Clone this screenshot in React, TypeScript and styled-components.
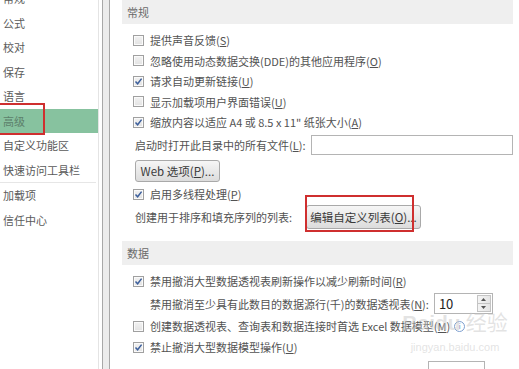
import React from "react";
import styled, { createGlobalStyle } from "styled-components";

const GlobalStyle = createGlobalStyle`
  body {
    margin: 0;
    background: #ffffff;
    font-family: "Noto Sans CJK SC", "Noto Sans", sans-serif;
    overflow: hidden;
  }
`;

const Window = styled.div`
  position: relative;
  display: flex;
  width: 519px;
  height: 369px;
  overflow: hidden;
  background: #ffffff;
  color: #505050;
  font-size: 11px;
`;

const Nav = styled.nav`
  width: 98px;
  flex-shrink: 0;
  border-right: 1px solid #e4e4e4;
  overflow: hidden;
`;

const NavList = styled.ul`
  list-style: none;
  margin: -14px 0 0;
  padding: 0;
`;

const NavItem = styled.li<{ $active?: boolean }>`
  position: relative;
  height: 24.5px;
  line-height: 24.5px;
  padding-left: 3px;
  margin-right: ${(p) => (p.$active ? "-4px" : "0")};
  font-size: 11px;
  color: ${(p) => (p.$active ? "#5d806b" : "#5a5a5a")};
  background: ${(p) => (p.$active ? "#87c29f" : "transparent")};
  white-space: nowrap;
`;

const NavSeparator = styled.li`
  height: 0;
  border-top: 1px solid #e6e6e6;
  margin: 0 2px 0 0;
`;

const RedMark = styled.span<{ $top: number; $left: number; $w: number; $h: number }>`
  position: absolute;
  top: ${(p) => p.$top}px;
  left: ${(p) => p.$left}px;
  width: ${(p) => p.$w}px;
  height: ${(p) => p.$h}px;
  border: 2px solid #cf2f2f;
  box-sizing: border-box;
  pointer-events: none;
`;

const Splitter = styled.div`
  width: 8px;
  flex-shrink: 0;
  margin-left: 3px;
  box-sizing: border-box;
  border-left: 1px solid #a8a8a8;
  border-right: 1px solid #a8a8a8;
  background: #ececec;
`;

const Main = styled.main`
  flex: 1;
  padding: 0 6px 0 12px;
  min-width: 0;
`;

const SectionHeader = styled.div<{ $gap?: number }>`
  height: 24px;
  line-height: 24px;
  margin-top: ${(p) => p.$gap ?? 0}px;
  padding-left: 5px;
  background: #efefef;
  color: #6a6a6a;
  font-size: 11px;
`;

const Options = styled.div<{ $top: number }>`
  padding: ${(p) => p.$top}px 0 0 11px;
`;

const Row = styled.div<{ $h?: number; $indent?: number }>`
  display: flex;
  align-items: center;
  height: ${(p) => p.$h ?? 20.5}px;
  padding-left: ${(p) => p.$indent ?? 0}px;
  white-space: nowrap;
`;

const Box = styled.span`
  display: inline-flex;
  align-items: center;
  justify-content: center;
  width: 11px;
  height: 11px;
  flex-shrink: 0;
  box-sizing: border-box;
  border: 1px solid #a0a0a0;
  background: linear-gradient(#f2f2f2, #e2e2e2);
  box-shadow: inset 0 0 0 1px #fafafa;
`;

const Label = styled.span<{ $gap?: number }>`
  margin-left: ${(p) => p.$gap ?? 6}px;
  color: #525252;
  u {
    text-decoration: underline;
    text-underline-offset: 1px;
  }
`;

const TextInput = styled.div`
  flex: 1;
  height: 20px;
  margin-left: 6px;
  box-sizing: border-box;
  border: 1px solid #b4b4b4;
  background: #ffffff;
`;

const Button = styled.button<{ $w: number; $h: number }>`
  width: ${(p) => p.$w}px;
  height: ${(p) => p.$h}px;
  padding: 0;
  box-sizing: border-box;
  border: 1px solid #a9a9a9;
  border-radius: 3px;
  background: linear-gradient(#f6f6f6, #dcdcdc);
  color: #3a3a3a;
  font-family: "Noto Sans CJK SC", "Noto Sans", sans-serif;
  font-size: 11.5px;
  white-space: nowrap;
  u {
    text-underline-offset: 1px;
  }
`;

const ButtonHolder = styled.span`
  position: relative;
  display: inline-flex;
  margin-left: 14px;
`;

const Spinner = styled.div`
  display: flex;
  align-items: stretch;
  width: 59px;
  height: 21px;
  margin-left: 5px;
  box-sizing: border-box;
  border: 1px solid #b4b4b4;
  background: #ffffff;
`;

const SpinValue = styled.span`
  flex: 1;
  padding-left: 4px;
  line-height: 19px;
  font-size: 13px;
  color: #222222;
`;

const SpinButtons = styled.div`
  display: flex;
  flex-direction: column;
  width: 12px;
  margin: 1px;
  border: 1px solid #c4c4c4;
  background: linear-gradient(90deg, #f4f4f4, #e4e4e4);
`;

const SpinHalf = styled.div`
  flex: 1;
  display: flex;
  align-items: center;
  justify-content: center;
  & + & {
    border-top: 1px solid #c4c4c4;
  }
`;

const InfoIcon = styled.span`
  display: inline-flex;
  align-items: center;
  justify-content: center;
  width: 9px;
  height: 9px;
  margin-left: 4px;
  border: 1px solid #7d9fd0;
  border-radius: 50%;
  color: #5b82bd;
  font-size: 7px;
  line-height: 1;
`;

const CutBox = styled.div`
  width: 57px;
  height: 20px;
  margin-left: 295px;
  margin-top: 3px;
  box-sizing: border-box;
  border: 1px solid #b4b4b4;
  border-bottom: none;
`;

const Watermark = styled.div`
  position: absolute;
  left: 398px;
  top: 308px;
  width: 114px;
  display: flex;
  flex-direction: column;
  align-items: center;
  color: rgba(200, 200, 200, 0.5);
  font-family: "Liberation Sans", sans-serif;
  white-space: nowrap;
  pointer-events: none;
`;

const WatermarkLogo = styled.span`
  font-size: 21px;
  line-height: 26px;
  font-weight: bold;
  span {
    font-family: "Noto Sans CJK SC", sans-serif;
    font-weight: normal;
    margin-left: 5px;
  }
`;

const WatermarkUrl = styled.span`
  font-size: 11px;
  line-height: 14px;
  margin-top: 4px;
`;

const Check = ({ checked }: { checked?: boolean }) => (
  <Box>
    {checked && (
      <svg width="9" height="9" viewBox="0 0 9 9">
        <path d="M1.5 4.6 L3.6 6.8 L7.6 1.6" fill="none" stroke="#3c5f9c" strokeWidth="1.5" />
      </svg>
    )}
  </Box>
);

const Arrow = ({ up }: { up?: boolean }) => (
  <svg width="5" height="3" viewBox="0 0 5 3">
    <path d={up ? "M0 3 L2.5 0 L5 3 Z" : "M0 0 L2.5 3 L5 0 Z"} fill="#555555" />
  </svg>
);

const navItems = ["常规", "公式", "校对", "保存", "语言"];

export default function App() {
  return (
    <Window>
      <GlobalStyle />
      <Nav>
        <NavList>
          {navItems.map((n) => (
            <NavItem key={n}>{n}</NavItem>
          ))}
          <NavItem $active>
            高级
            <RedMark $top={-6} $left={-3} $w={48} $h={32} />
          </NavItem>
          <NavItem>自定义功能区</NavItem>
          <NavItem>快速访问工具栏</NavItem>
          <NavSeparator />
          <NavItem>加载项</NavItem>
          <NavItem>信任中心</NavItem>
        </NavList>
      </Nav>
      <Splitter />
      <Main>
        <SectionHeader>常规</SectionHeader>
        <Options $top={6}>
          <Row>
            <Check />
            <Label>
              提供声音反馈(<u>S</u>)
            </Label>
          </Row>
          <Row>
            <Check />
            <Label>
              忽略使用动态数据交换(DDE)的其他应用程序(<u>O</u>)
            </Label>
          </Row>
          <Row>
            <Check checked />
            <Label>
              请求自动更新链接(<u>U</u>)
            </Label>
          </Row>
          <Row>
            <Check />
            <Label>
              显示加载项用户界面错误(<u>U</u>)
            </Label>
          </Row>
          <Row>
            <Check checked />
            <Label>
              缩放内容以适应 A4 或 8.5 x 11" 纸张大小(<u>A</u>)
            </Label>
          </Row>
          <Row $h={24} $indent={2}>
            <Label $gap={0}>
              启动时打开此目录中的所有文件(<u>L</u>):
            </Label>
            <TextInput />
          </Row>
          <Row $h={28} $indent={2}>
            <Button $w={85} $h={22}>
              Web 选项(<u>P</u>)...
            </Button>
          </Row>
          <Row $h={19}>
            <Check checked />
            <Label>
              启用多线程处理(<u>P</u>)
            </Label>
          </Row>
          <Row $h={27} $indent={2}>
            <Label $gap={0}>创建用于排序和填充序列的列表:</Label>
            <ButtonHolder>
              <Button $w={115} $h={24}>
                编辑自定义列表(<u>O</u>)...
              </Button>
              <RedMark $top={-10} $left={-1} $w={109} $h={37} />
            </ButtonHolder>
          </Row>
        </Options>
        <SectionHeader $gap={10}>数据</SectionHeader>
        <Options $top={6}>
          <Row $h={21}>
            <Check checked />
            <Label>
              禁用撤消大型数据透视表刷新操作以减少刷新时间(<u>R</u>)
            </Label>
          </Row>
          <Row $h={24} $indent={11}>
            <Label>
              禁用撤消至少具有此数目的数据源行(千)的数据透视表(<u>N</u>):
            </Label>
            <Spinner>
              <SpinValue>10</SpinValue>
              <SpinButtons>
                <SpinHalf>
                  <Arrow up />
                </SpinHalf>
                <SpinHalf>
                  <Arrow />
                </SpinHalf>
              </SpinButtons>
            </Spinner>
          </Row>
          <Row $h={21}>
            <Check />
            <Label>
              创建数据透视表、查询表和数据连接时首选 Excel 数据模型(<u>M</u>)
            </Label>
            <InfoIcon>i</InfoIcon>
          </Row>
          <Row $h={21}>
            <Check checked />
            <Label>
              禁止撤消大型数据模型操作(<u>U</u>)
            </Label>
          </Row>
          <CutBox />
        </Options>
      </Main>
      <Watermark>
        <WatermarkLogo>
          Baidu<span>经验</span>
        </WatermarkLogo>
        <WatermarkUrl>jingyan.baidu.com</WatermarkUrl>
      </Watermark>
    </Window>
  );
}
